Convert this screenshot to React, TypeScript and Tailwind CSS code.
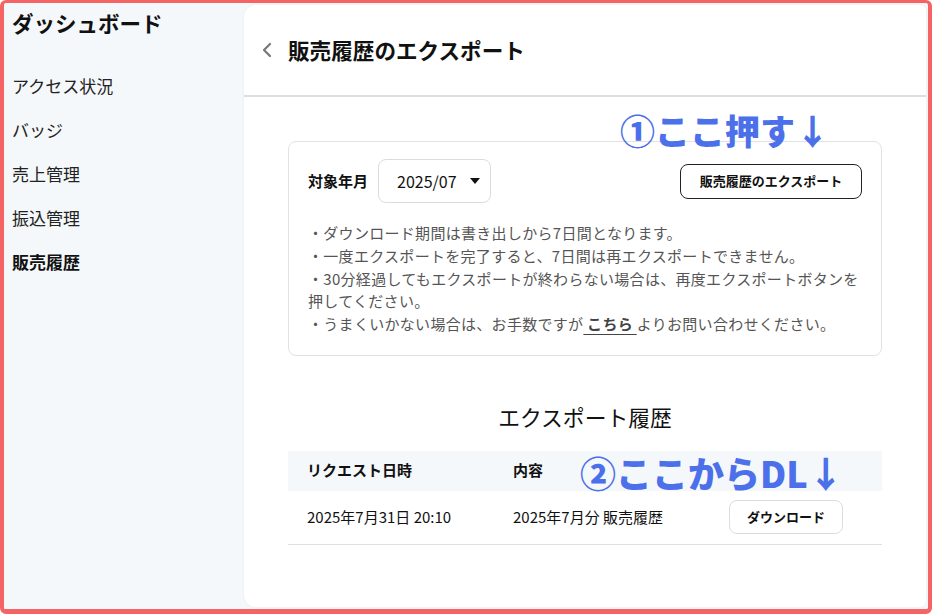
import React from "react";

const navItems = ["アクセス状況", "バッジ", "売上管理", "振込管理", "販売履歴"];

const notes = [
  "・ダウンロード期間は書き出しから7日間となります。",
  "・一度エクスポートを完了すると、7日間は再エクスポートできません。",
  "・30分経過してもエクスポートが終わらない場合は、再度エクスポートボタンを押してください。",
];

const Sidebar = () => (
  <aside className="w-[240px] shrink-0 bg-[#f5f8fa] pl-2 pt-[5px]">
    <h1 className="text-[21.5px] font-bold leading-[30px] text-[#111]">ダッシュボード</h1>
    <nav className="mt-[35px] flex flex-col gap-[18px]">
      {navItems.map((item) => (
        <div
          key={item}
          className={
            item === "販売履歴"
              ? "text-[17px] leading-[26px] font-bold text-[#111]"
              : "text-[17px] leading-[26px] text-[#222]"
          }
        >
          {item}
        </div>
      ))}
    </nav>
  </aside>
);

const App = () => {
  return (
    <div className="h-[614px] w-[932px] overflow-hidden rounded-md border-t-[3px] border-l-4 border-r-4 border-b-[5px] border-[#f46464] bg-[#f5f8fa] font-['Noto_Sans_CJK_JP','Noto_Sans',sans-serif]">
      <div className="flex h-full">
        <Sidebar />

        <main className="mt-[2px] mb-[2px] mr-[2px] flex-1 rounded-l-xl rounded-r-md bg-white shadow-[0_0_3px_rgba(0,0,0,0.06)]">
          <header className="flex h-[92px] items-center gap-[15px] border-b-2 border-[#dedede] pl-[17px]">
            <svg width="12" height="18" viewBox="0 0 12 18" fill="none">
              <path d="M9 3L3 9l6 6" stroke="#777" strokeWidth="2.2" strokeLinecap="round" strokeLinejoin="round" />
            </svg>
            <h2 className="text-[21.6px] font-bold text-[#111]">販売履歴のエクスポート</h2>
          </header>

          <div className="relative px-[44px] pt-[44px]">
            <div className="pointer-events-none absolute left-[376px] top-[15px] text-[35px] font-black leading-none text-[#4c6fea]">
              ①ここ押す↓
            </div>

            <section className="rounded-lg border border-[#e2e2e2] px-[19px] pt-[17px] pb-[19px]">
              <div className="flex items-center justify-between">
                <div className="flex items-center gap-[10px]">
                  <span className="text-[15px] font-bold text-[#111]">対象年月</span>
                  <button
                    type="button"
                    className="flex h-[44px] w-[113px] items-center gap-[13px] rounded-lg border border-[#dcdcdc] pl-[18px] text-[16px] text-[#111]"
                  >
                    2025/07
                    <svg width="10" height="6" viewBox="0 0 10 6">
                      <path d="M0 0h10L5 6z" fill="#111" />
                    </svg>
                  </button>
                </div>
                <button
                  type="button"
                  className="h-[35px] w-[182px] rounded-lg border border-[#222] text-[13px] font-bold text-[#111]"
                >
                  販売履歴のエクスポート
                </button>
              </div>

              <div className="mt-[19px] text-[15px] leading-[22.8px] tracking-[0.3px] text-[#555]">
                {notes.map((n) => (
                  <p key={n}>{n}</p>
                ))}
                <p>
                  ・うまくいかない場合は、お手数ですが
                  <a className="font-bold text-[#444] underline underline-offset-4"> こちら </a>
                  よりお問い合わせください。
                </p>
              </div>
            </section>

            <h3 className="mt-[45px] text-center text-[21.8px] text-[#111]">エクスポート履歴</h3>

            <div className="relative mt-[17px]">
              <div className="pointer-events-none absolute left-[292px] top-[3px] text-[36px] font-black leading-none text-[#4c6fea]">
                ②ここからDL↓
              </div>
              <div className="flex h-[40px] items-center bg-[#f5f8fa] pl-[19px] text-[15px] font-bold text-[#111]">
                <span className="w-[206px]">リクエスト日時</span>
                <span>内容</span>
              </div>
              <div className="flex h-[54px] items-center border-b border-[#e0e0e0] pl-[19px] text-[15px] text-[#111]">
                <span className="w-[206px]">2025年7月31日 20:10</span>
                <span className="w-[216px]">2025年7月分 販売履歴</span>
                <button
                  type="button"
                  className="h-[34px] w-[114px] rounded-lg border border-[#dcdcdc] text-[13px] font-bold text-[#111]"
                >
                  ダウンロード
                </button>
              </div>
            </div>
          </div>
        </main>
      </div>
    </div>
  );
};

export default App;
